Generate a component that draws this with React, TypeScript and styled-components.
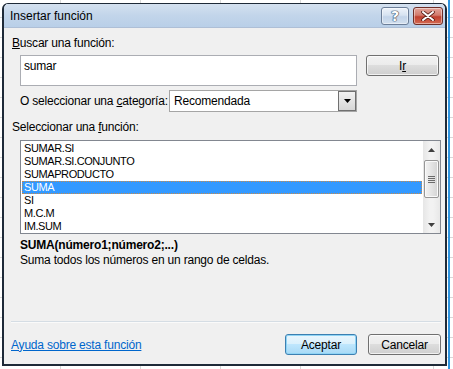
import { createGlobalStyle, styled } from "styled-components";

const GlobalStyle = createGlobalStyle`
  html, body {
    margin: 0;
    padding: 0;
  }
  body {
    width: 453px;
    height: 369px;
    overflow: hidden;
    background-color: #fff;
    background-image:
      linear-gradient(to right, transparent 448px, #2f95e0 448px, #2f95e0 450px, transparent 450px),
      repeating-linear-gradient(to right, transparent 0, transparent 60px, #d8d8d8 60px, #d8d8d8 61px, transparent 61px, transparent 80px),
      repeating-linear-gradient(to bottom, transparent 0, transparent 17px, #d8d8d8 17px, #d8d8d8 18px, transparent 18px, transparent 20px);
    background-position: 0 0, -80px 0, 0 0;
    font-family: "Liberation Sans", Arial, sans-serif;
    font-size: 12px;
    color: #000;
  }
`;

const FONT = `"Liberation Sans", Arial, sans-serif`;

const Page = styled.div`
  padding: 3px 0 0 2px;
`;

// ventana del cuadro de diálogo
const Dialog = styled.div`
  width: 445px;
  height: 363px;
  box-sizing: border-box;
  border: 1px solid #1e2a38;
  border-width: 1px 2px 2px 2px;
  border-radius: 6px 6px 0 0;
  background: #f0f0f0;
  display: flex;
  flex-direction: column;
  overflow: hidden;
  letter-spacing: -0.2px;
`;

// barra de título
const TitleBar = styled.div`
  height: 23px;
  display: flex;
  align-items: center;
  padding: 0 2px 0 6px;
  background: linear-gradient(to bottom, #d4e1f0 0%, #c2d5ea 50%, #b9cfe8 100%);
  border-bottom: 1px solid #aebfd6;
`;

const Title = styled.span`
  flex: 1;
  font-family: ${FONT};
  font-size: 12px;
  color: #000;
  letter-spacing: 0;
`;

const CaptionButton = styled.div<{ $close?: boolean }>`
  width: ${({ $close }) => ($close ? "30px" : "28px")};
  height: 18px;
  margin-left: ${({ $close }) => ($close ? "4px" : "0")};
  box-sizing: border-box;
  border: 1px solid ${({ $close }) => ($close ? "#6e2e27" : "#6c7e98")};
  border-radius: 3px;
  background: ${({ $close }) =>
    $close
      ? "linear-gradient(to bottom, #e2a69c 0%, #d27a6c 45%, #c0402f 55%, #d46a52 100%)"
      : "linear-gradient(to bottom, #eef3fa 0%, #d7e3f1 45%, #c3d4e9 55%, #d2e0ef 100%)"};
  box-shadow: inset 0 0 0 1px rgba(255, 255, 255, 0.45);
  display: flex;
  align-items: center;
  justify-content: center;
`;

const HelpGlyph = styled.span`
  font-family: "DejaVu Sans", sans-serif;
  font-weight: bold;
  font-size: 14px;
  line-height: 1;
  color: #fff;
  letter-spacing: 0;
  text-shadow: 0 0 1px #3d4f68, 0 0 1px #3d4f68, 0 0 1px #3d4f68, 0 0 1px #3d4f68;
`;

// zona de contenido
const Body = styled.div`
  flex: 1;
  display: flex;
  flex-direction: column;
  padding: 0 4px 0 7px;
`;

const Label = styled.div<{ $indent?: number; $top?: number; $width?: number }>`
  font-family: ${FONT};
  font-size: 12px;
  line-height: 15px;
  margin-left: ${({ $indent }) => $indent ?? 1}px;
  margin-top: ${({ $top }) => $top ?? 0}px;
  width: ${({ $width }) => ($width ? `${$width}px` : "auto")};
  white-space: nowrap;
`;

const U = styled.span`
  text-decoration: underline;
`;

const SearchRow = styled.div`
  display: flex;
  align-items: flex-start;
  gap: 9px;
  margin: 4px 0 0 9px;
`;

const SearchBox = styled.div`
  width: 337px;
  height: 31px;
  box-sizing: border-box;
  border: 1px solid #abadb3;
  background: #fff;
  padding: 3px 0 0 3px;
  font-family: ${FONT};
  font-size: 12px;
  line-height: 15px;
`;

const Button = styled.div<{ $default?: boolean; $w?: number }>`
  width: ${({ $w }) => $w ?? 73}px;
  height: 21px;
  box-sizing: border-box;
  border: 1px solid ${({ $default }) => ($default ? "#3c7fb1" : "#707070")};
  border-radius: 3px;
  background: ${({ $default }) =>
    $default
      ? "linear-gradient(to bottom, #eaf6fd 0%, #d9f0fc 50%, #bee6fd 50%, #a7d9f5 100%)"
      : "linear-gradient(to bottom, #f2f2f2 0%, #ebebeb 50%, #dddddd 50%, #cfcfcf 100%)"};
  box-shadow: inset 0 0 0 1px
    ${({ $default }) => ($default ? "#8fd4f5" : "rgba(255, 255, 255, 0.7)")};
  display: flex;
  align-items: center;
  justify-content: center;
  font-family: ${FONT};
  font-size: 12px;
  color: #000;
`;

const CategoryRow = styled.div`
  display: flex;
  align-items: center;
  margin: 4px 0 0 9px;
  height: 22px;
`;

const Select = styled.div`
  width: 188px;
  height: 22px;
  box-sizing: border-box;
  border: 1px solid #a5a5a5;
  background: #fff;
  display: flex;
  align-items: center;
  padding: 0 0 0 4px;
  font-family: ${FONT};
  font-size: 12px;
`;

const SelectText = styled.span`
  flex: 1;
`;

const DropButton = styled.div`
  width: 18px;
  height: 20px;
  box-sizing: border-box;
  border: 1px solid #707070;
  background: linear-gradient(to bottom, #f2f2f2, #d6d6d6);
  display: flex;
  align-items: center;
  justify-content: center;
`;

// lista de funciones
const ListBox = styled.div`
  margin: 5px 0 0 9px;
  width: 421px;
  height: 94px;
  box-sizing: border-box;
  border: 1px solid #828790;
  background: #fff;
  display: flex;
`;

const Items = styled.div`
  flex: 1;
  padding: 1px 0 0 1px;
`;

const Item = styled.div<{ $selected?: boolean }>`
  height: 13px;
  line-height: 13px;
  padding-left: 2px;
  font-family: ${FONT};
  font-size: 11px;
  letter-spacing: -0.4px;
  color: ${({ $selected }) => ($selected ? "#fff" : "#000")};
  background: ${({ $selected }) => ($selected ? "#3399ff" : "transparent")};
  outline: ${({ $selected }) => ($selected ? "1px dotted #c98b4a" : "none")};
  outline-offset: -1px;
  margin-right: 1px;
`;

const ScrollBar = styled.div`
  width: 17px;
  background: linear-gradient(to right, #e6e6e6, #f2f2f2 40%, #f2f2f2 60%, #e8e8e8);
  display: flex;
  flex-direction: column;
  align-items: center;
`;

const Arrow = styled.div`
  height: 17px;
  display: flex;
  align-items: center;
  justify-content: center;
`;

const Thumb = styled.div`
  width: 15px;
  height: 38px;
  box-sizing: border-box;
  border: 1px solid #979797;
  border-radius: 2px;
  background: linear-gradient(to right, #f3f3f3, #e4e4e4 50%, #d4d4d4);
  box-shadow: inset 0 0 0 1px #fafafa;
  display: flex;
  align-items: center;
  justify-content: center;
  margin-top: 2px;
`;

const Track = styled.div`
  flex: 1;
`;

const Signature = styled.div`
  margin: 4px 0 0 9px;
  font-family: ${FONT};
  font-size: 12px;
  line-height: 15px;
  font-weight: bold;
`;

const Description = styled.div`
  margin-left: 9px;
  font-family: ${FONT};
  font-size: 12px;
  line-height: 15px;
`;

const Spacer = styled.div`
  flex: 1;
`;

const Separator = styled.div`
  width: 430px;
  height: 1px;
  background: #d5dde4;
  border-bottom: 1px solid #fafafa;
`;

const Footer = styled.div`
  display: flex;
  align-items: center;
  height: 21px;
  margin: 11px 0 9px 0;
`;

const HelpLink = styled.a`
  flex: 1;
  font-family: ${FONT};
  font-size: 12px;
  color: #0066cc;
  text-decoration: underline;
`;

const Buttons = styled.div`
  display: flex;
  gap: 11px;
`;

const functions = [
  "SUMAR.SI",
  "SUMAR.SI.CONJUNTO",
  "SUMAPRODUCTO",
  "SUMA",
  "SI",
  "M.C.M",
  "IM.SUM",
];

const App = () => {
  const selected = "SUMA";
  return (
    <>
      <GlobalStyle />
      <Page>
        <Dialog>
          <TitleBar>
            <Title>Insertar función</Title>
            <CaptionButton>
              <HelpGlyph>?</HelpGlyph>
            </CaptionButton>
            <CaptionButton $close>
              <svg width="14" height="10" viewBox="0 0 14 10">
                <path
                  d="M2 1 L12 9 M12 1 L2 9"
                  stroke="#5a1f18"
                  strokeWidth="3.6"
                  strokeLinecap="round"
                />
                <path
                  d="M2 1 L12 9 M12 1 L2 9"
                  stroke="#fff"
                  strokeWidth="2"
                  strokeLinecap="round"
                />
              </svg>
            </CaptionButton>
          </TitleBar>
          <Body>
            <Label $top={8}>
              <U>B</U>uscar una función:
            </Label>
            <SearchRow>
              <SearchBox>sumar</SearchBox>
              <Button>
                I<U>r</U>
              </Button>
            </SearchRow>
            <CategoryRow>
              <Label $indent={0} $width={149}>
                O seleccionar una <U>c</U>ategoría:
              </Label>
              <Select>
                <SelectText>Recomendada</SelectText>
                <DropButton>
                  <svg width="7" height="4" viewBox="0 0 7 4">
                    <path d="M0 0 H7 L3.5 4 Z" fill="#000" />
                  </svg>
                </DropButton>
              </Select>
            </CategoryRow>
            <Label $top={8}>
              Seleccionar una <U>f</U>unción:
            </Label>
            <ListBox>
              <Items>
                {functions.map((fn) => (
                  <Item key={fn} $selected={fn === selected}>
                    {fn}
                  </Item>
                ))}
              </Items>
              <ScrollBar>
                <Arrow>
                  <svg width="7" height="4" viewBox="0 0 7 4">
                    <path d="M3.5 0 L7 4 H0 Z" fill="#404040" />
                  </svg>
                </Arrow>
                <Thumb>
                  <svg width="7" height="7" viewBox="0 0 7 7">
                    <path d="M0 0.5 H7 M0 2.5 H7 M0 4.5 H7 M0 6.5 H7" stroke="#6b6b6b" strokeWidth="1" />
                  </svg>
                </Thumb>
                <Track />
                <Arrow>
                  <svg width="7" height="4" viewBox="0 0 7 4">
                    <path d="M0 0 H7 L3.5 4 Z" fill="#404040" />
                  </svg>
                </Arrow>
              </ScrollBar>
            </ListBox>
            <Signature>SUMA(número1;número2;...)</Signature>
            <Description>Suma todos los números en un rango de celdas.</Description>
            <Spacer />
            <Separator />
            <Footer>
              <HelpLink href="#">Ayuda sobre esta función</HelpLink>
              <Buttons>
                <Button $default $w={72}>
                  Aceptar
                </Button>
                <Button>Cancelar</Button>
              </Buttons>
            </Footer>
          </Body>
        </Dialog>
      </Page>
    </>
  );
};

export default App;
